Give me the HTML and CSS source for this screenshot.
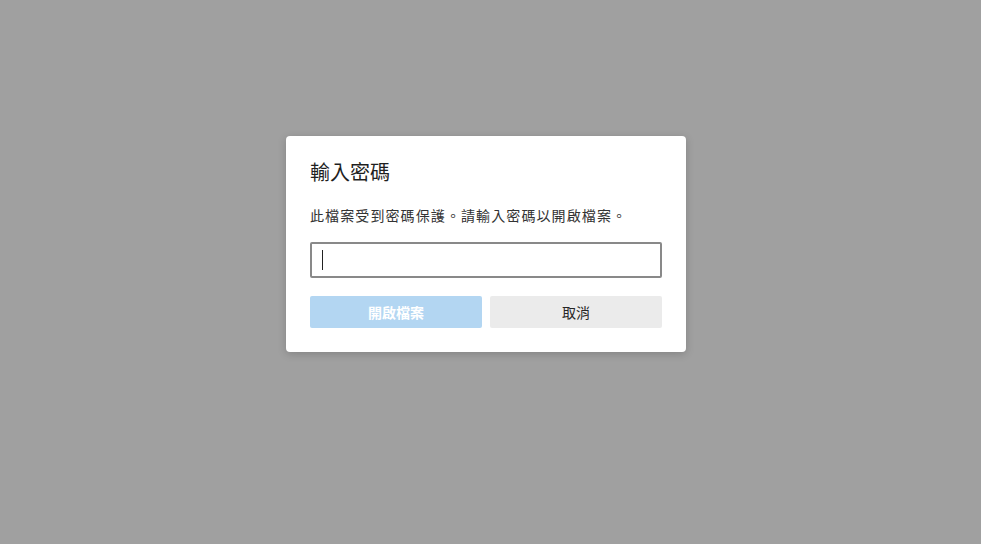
FILE: index.html
```html
<!DOCTYPE html>
<html lang="zh-Hant">
<head>
<meta charset="utf-8">
<link rel="stylesheet" href="styles.css">
</head>
<body>
<div class="overlay">
  <div class="dialog">
    <h1 class="title">輸入密碼</h1>
    <p class="desc">此檔案受到密碼保護。請輸入密碼以開啟檔案。</p>
    <div class="field"><span class="caret"></span></div>
    <div class="actions">
      <button class="btn btn-primary" disabled>開啟檔案</button>
      <button class="btn btn-secondary">取消</button>
    </div>
  </div>
</div>
</body>
</html>
```
FILE: styles.css
```css
html, body {
  margin: 0;
  padding: 0;
  height: 100%;
}
body {
  background: #a0a0a0;
  font-family: "Noto Sans CJK TC", "Noto Sans", sans-serif;
}
.overlay {
  height: 544px;
  box-sizing: border-box;
  padding: 136px 0 0 286px;
  display: flex;
  align-items: flex-start;
}
.dialog {
  width: 352px;
  background: #ffffff;
  border-radius: 4px;
  box-shadow: 0 2px 8px rgba(0, 0, 0, 0.18);
  padding: 22px 24px 24px;
}
.title {
  margin: 0;
  font-size: 20px;
  font-weight: 400;
  line-height: 28px;
  color: #1f1f1f;
}
.desc {
  margin: 20px 0 0;
  font-size: 14px;
  letter-spacing: 1.1px;
  line-height: 18px;
  font-weight: 400;
  color: #333333;
}
.field {
  margin-top: 18px;
  height: 32px;
  border: 2px solid #898989;
  border-radius: 2px;
  display: flex;
  align-items: center;
  padding-left: 10px;
}
.caret {
  width: 1px;
  height: 20px;
  background: #222;
}
.actions {
  margin-top: 18px;
  display: grid;
  grid-template-columns: 1fr 1fr;
  gap: 8px;
}
.btn {
  height: 32px;
  border: none;
  border-radius: 2px;
  font-family: inherit;
  font-size: 14px;
  font-weight: 600;
  padding: 0;
}
.btn-primary {
  background: #b3d6f2;
  color: #ffffff;
}
.btn-secondary {
  background: #ebebeb;
  color: #262626;
  font-weight: 400;
}
```
